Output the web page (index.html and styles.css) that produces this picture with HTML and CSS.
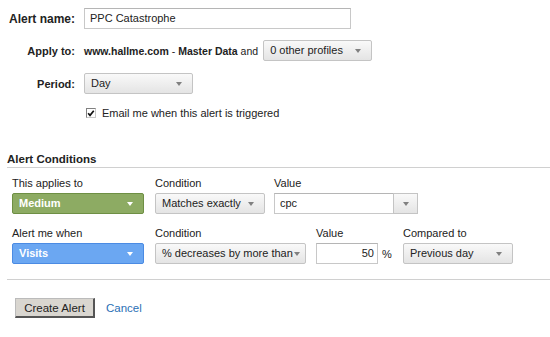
FILE: index.html
```html
<!DOCTYPE html>
<html>
<head>
<meta charset="utf-8">
<link rel="stylesheet" href="styles.css">
</head>
<body>
<div class="page">
  <div class="settings">
    <div class="row row-name">
      <label class="lbl lbl-big">Alert name:</label>
      <div class="textbox name-box">PPC Catastrophe</div>
    </div>
    <div class="row row-apply">
      <label class="lbl">Apply to:</label>
      <div class="apply-text"><b>www.hallme.com</b> - <b>Master Data</b> and</div>
      <div class="select profiles"><span>0 other profiles</span><i class="caret"></i></div>
    </div>
    <div class="row row-period">
      <label class="lbl">Period:</label>
      <div class="select period"><span>Day</span><i class="caret"></i></div>
    </div>
    <div class="row row-check">
      <span class="lbl"></span>
      <span class="checkbox"><svg width="9" height="9" viewBox="0 0 9 9"><path d="M1.3 4.2 L3.4 6.6 L7.6 1.4" fill="none" stroke="#111" stroke-width="1.9"/></svg></span>
      <span class="check-text">Email me when this alert is triggered</span>
    </div>
  </div>

  <h2 class="section-title">Alert Conditions</h2>

  <div class="conditions">
    <div class="cond-row">
      <div class="field f1">
        <div class="flabel">This applies to</div>
        <div class="select colored green w132"><span>Medium</span><i class="caret white"></i></div>
      </div>
      <div class="field f2a">
        <div class="flabel">Condition</div>
        <div class="select w110"><span>Matches exactly</span><i class="caret"></i></div>
      </div>
      <div class="field">
        <div class="flabel">Value</div>
        <div class="combo"><span class="combo-text">cpc</span><span class="combo-btn"><i class="caret"></i></span></div>
      </div>
    </div>
    <div class="cond-row row2">
      <div class="field f1">
        <div class="flabel">Alert me when</div>
        <div class="select colored blue w132"><span>Visits</span><i class="caret white"></i></div>
      </div>
      <div class="field f2b">
        <div class="flabel">Condition</div>
        <div class="select w151"><span>% decreases by more than</span><i class="caret"></i></div>
      </div>
      <div class="field f-value">
        <div class="flabel">Value</div>
        <div class="value-wrap"><div class="textbox num">50</div><span class="pct">%</span></div>
      </div>
      <div class="field">
        <div class="flabel">Compared to</div>
        <div class="select w110"><span>Previous day</span><i class="caret"></i></div>
      </div>
    </div>
  </div>

  <div class="actions">
    <button class="btn">Create Alert</button>
    <a class="cancel" href="#">Cancel</a>
  </div>
</div>
</body>
</html>
```

FILE: styles.css
```css
* { box-sizing: border-box; }
html, body { margin: 0; padding: 0; background: #fff; }
body {
  font-family: "Liberation Sans", Arial, sans-serif;
  font-size: 11px;
  color: #222;
  overflow: hidden;
}
.page { padding: 8px 0 0 7px; }

.settings { display: flex; flex-direction: column; }
.row { display: flex; align-items: center; }
.lbl {
  width: 68px;
  text-align: right;
  font-weight: bold;
  font-size: 11px;
  color: #222;
  margin-right: 9px;
  flex: none;
  white-space: nowrap;
}
.lbl-big { font-size: 12px; }
.row-apply { margin-top: 11px; }
.row-period { margin-top: 12px; }
.row-check { margin-top: 12px; height: 14px; }

.textbox {
  height: 21px;
  border: 1px solid #c8c8c8;
  border-top-color: #b5b5b5;
  background: #fff;
  padding: 0 5px;
  line-height: 19px;
  font-size: 11px;
  color: #222;
}
.name-box { width: 267px; }

.apply-text { font-size: 10.5px; margin-right: 5px; white-space: nowrap; }
.apply-text b { font-weight: bold; }

.select {
  position: relative;
  height: 21px;
  border: 1px solid #c4c4c4;
  border-radius: 2px;
  background: linear-gradient(#f9f9f9, #e4e4e4);
  padding: 0 20px 0 6px;
  line-height: 19px;
  font-size: 11px;
  color: #222;
  white-space: nowrap;
  overflow: hidden;
}
.caret {
  position: absolute;
  right: 10px;
  top: 8px;
  width: 0; height: 0;
  border-left: 3.5px solid transparent;
  border-right: 3.5px solid transparent;
  border-top: 4px solid #808080;
}
.caret.white { border-top-color: #fff; }
.profiles { width: 109px; }
.period { width: 109px; }

.checkbox {
  width: 10px; height: 10px;
  border: 1px solid #808080;
  border-right-color: #c8c8c8;
  border-bottom-color: #c8c8c8;
  background: #fff;
  margin-left: 2px;
  margin-right: 6px;
  display: flex;
  align-items: center;
  justify-content: center;
}
.checkbox svg { display: block; }
.check-text { font-size: 11px; }

.section-title {
  margin: 32px 0 0 0;
  font-size: 11.5px;
  font-weight: bold;
  color: #222;
  padding-bottom: 1px;
  border-bottom: 1px solid #d0d0d0;
  line-height: 14px;
}

.conditions { padding-left: 5px; }
.cond-row { display: flex; margin-top: 9px; }
.cond-row.row2 { margin-top: 13px; }
.field { display: flex; flex-direction: column; }
.flabel { font-size: 11px; line-height: 13px; margin-bottom: 3px; color: #222; }
.f1 { margin-right: 11px; }
.f2a { margin-right: 9px; }
.f2b { margin-right: 10px; }

.w132 { width: 132px; }
.w110 { width: 110px; }
.w151 { width: 151px; padding-right: 16px; }
.w151 .caret { right: 5px; }

.colored { color: #fff; font-weight: bold; }
.green { background: #8dab63; border-color: #6e8f44; }
.blue { background: #6ba7f2; border-color: #4b8be3; }

.combo { display: flex; width: 144px; height: 21px; }
.combo-text {
  flex: 1;
  border: 1px solid #c8c8c8;
  border-top-color: #b5b5b5;
  border-right: none;
  background: #fff;
  padding: 0 5px;
  line-height: 19px;
}
.combo-btn {
  position: relative;
  width: 25px;
  border: 1px solid #c4c4c4;
  background: linear-gradient(#f9f9f9, #e4e4e4);
}
.combo-btn .caret { right: 8px; }

.f-value { margin-right: 13px; }
.value-wrap { display: flex; align-items: center; }
.num { width: 62px; text-align: right; padding-right: 3px; }
.pct { margin-left: 4px; width: 8px; font-size: 11px; }

.actions {
  margin-top: 15px;
  border-top: 1px solid #d0d0d0;
  padding: 18px 0 0 8px;
  display: flex;
  align-items: center;
}
.btn {
  font-family: "Liberation Sans", Arial, sans-serif;
  font-size: 11.5px;
  color: #222;
  width: 80px;
  height: 20px;
  padding: 0;
  background: #d9d6d0;
  border: 1px solid #bbb;
  border-right: 2px solid #555;
  border-bottom: 2px solid #555;
}
.cancel {
  margin-left: 11px;
  color: #2a6fb5;
  text-decoration: none;
  font-size: 11.5px;
}
```
